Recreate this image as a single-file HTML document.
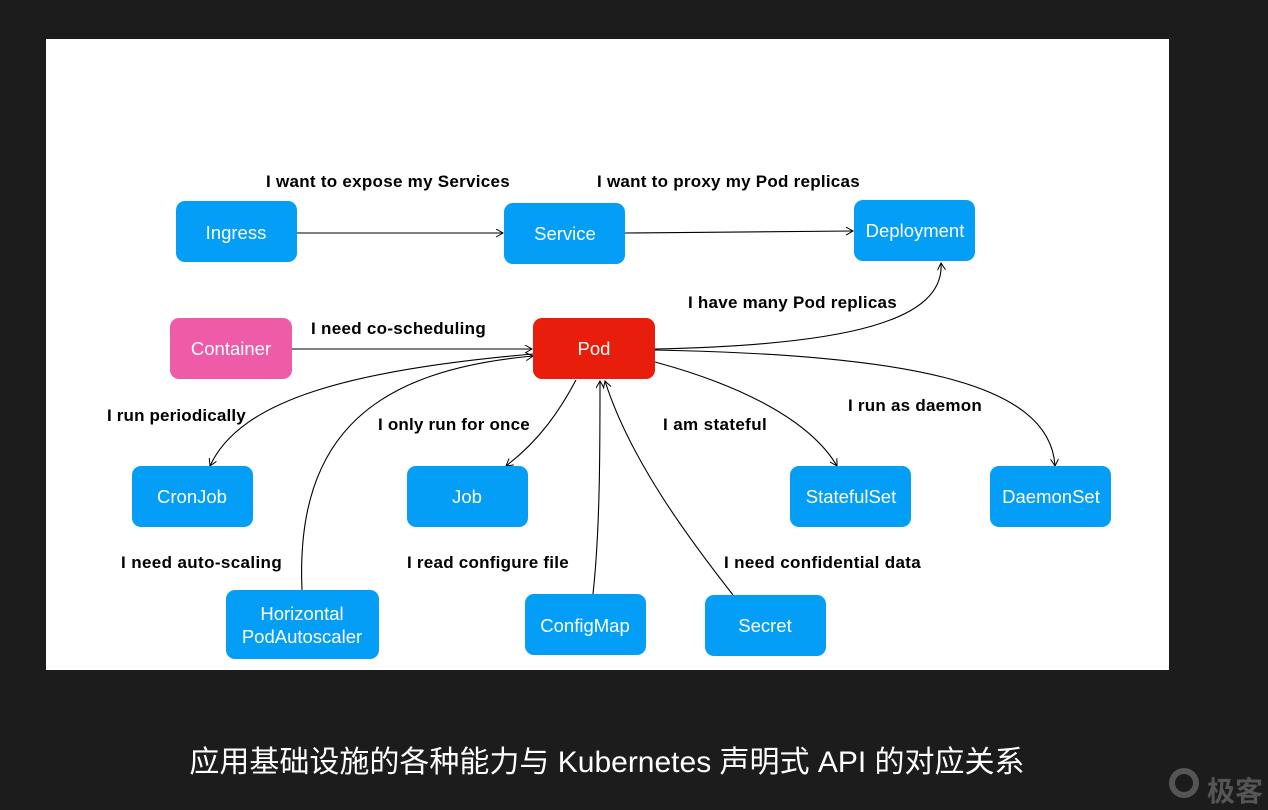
<html><head><style>
body{margin:0;width:1268px;height:805px;background:#1c1c1c;overflow:hidden;font-family:"Liberation Sans","Noto Sans CJK SC",sans-serif}
.p{position:absolute;left:46px;top:39px;width:1123px;height:631px;background:#fff}
.cap{position:absolute;left:0;width:1214px;top:737px;text-align:center;color:#fff;font-size:30px}
.wm{position:absolute;left:1207px;top:770px;color:#555;font-size:28px;font-weight:bold}
</style></head><body>
<div class="p"></div>
<svg width="1268" height="805" style="position:absolute;left:0;top:0">
<defs><marker id="a" markerWidth="10" markerHeight="10" refX="8" refY="4" orient="auto" markerUnits="userSpaceOnUse"><path d="M1,0 L8,4 L1,8" fill="none" stroke="#000" stroke-width="1"/></marker></defs>
<g fill="none" stroke="#000" stroke-width="1.1" marker-end="url(#a)">
<path d="M297,233 L503,233"/>
<path d="M625,233 L853,231"/>
<path d="M292,349 L532,349"/>
<path d="M655,349 C850,345 945,320 941,263"/>
<path d="M533,354 C350,370 240,400 210,466"/>
<path d="M302,590 C295,430 380,370 533,356"/>
<path d="M576,380 C560,410 540,440 506,466"/>
<path d="M593,594 C600,530 600,450 600,381"/>
<path d="M733,595 C690,540 630,460 605,381"/>
<path d="M655,362 C740,385 810,420 837,466"/>
<path d="M655,350 C900,355 1050,380 1055,466"/>
</g>
<g font-family="Liberation Sans,sans-serif">
<g fill="#059ef7">
<rect x="176" y="201" width="121" height="61" rx="9"/>
<rect x="504" y="203" width="121" height="61" rx="9"/>
<rect x="854" y="200" width="121" height="61" rx="9"/>
<rect x="132" y="466" width="121" height="61" rx="9"/>
<rect x="407" y="466" width="121" height="61" rx="9"/>
<rect x="790" y="466" width="121" height="61" rx="9"/>
<rect x="990" y="466" width="121" height="61" rx="9"/>
<rect x="226" y="590" width="153" height="69" rx="9"/>
<rect x="525" y="594" width="121" height="61" rx="9"/>
<rect x="705" y="595" width="121" height="61" rx="9"/>
</g>
<rect x="170" y="318" width="122" height="61" rx="9" fill="#ee5ca8"/>
<rect x="533" y="318" width="122" height="61" rx="9" fill="#e81d0b"/>
<g fill="#fff" font-size="18.5" text-anchor="middle">
<text x="236" y="239">Ingress</text><text x="565" y="240">Service</text><text x="915" y="237">Deployment</text>
<text x="231" y="355">Container</text><text x="594" y="355">Pod</text>
<text x="192" y="503">CronJob</text><text x="467" y="503">Job</text><text x="851" y="503">StatefulSet</text><text x="1051" y="503">DaemonSet</text>
<text x="302" y="620">Horizontal</text><text x="302" y="643">PodAutoscaler</text>
<text x="585" y="632">ConfigMap</text><text x="765" y="632">Secret</text>
</g>
<g fill="#000" font-size="17" font-weight="bold" letter-spacing="0.3">
<text x="266" y="187" textLength="244">I want to expose my Services</text>
<text x="597" y="187" textLength="263">I want to proxy my Pod replicas</text>
<text x="688" y="308" textLength="209">I have many Pod replicas</text>
<text x="311" y="334" textLength="175">I need co-scheduling</text>
<text x="107" y="421" textLength="139">I run periodically</text>
<text x="378" y="430" textLength="152">I only run for once</text>
<text x="663" y="430" textLength="104">I am stateful</text>
<text x="848" y="411" textLength="134">I run as daemon</text>
<text x="121" y="568" textLength="161">I need auto-scaling</text>
<text x="407" y="568" textLength="162">I read configure file</text>
<text x="724" y="568" textLength="197">I need confidential data</text>
</g></g>
<circle cx="1184" cy="783" r="12" fill="none" stroke="#555" stroke-width="6"/>
</svg>
<div class="cap">应用基础设施的各种能力与 Kubernetes 声明式 API 的对应关系</div>
<div class="wm">极客</div>
</body></html>
